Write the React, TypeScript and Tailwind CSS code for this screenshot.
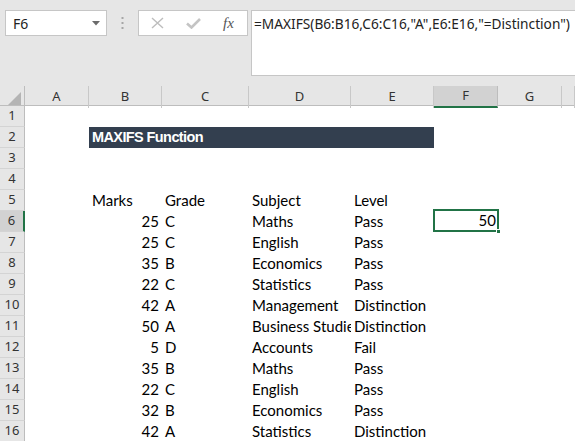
import React from "react";

const cols = ["A", "B", "C", "D", "E", "F", "G", ""];
const gridCols = "grid grid-cols-[25px_64px_73px_87px_102px_83px_64px_64px_1fr]";

type Row = { marks: string; grade: string; subject: string; level: string };

const data: Row[] = [
  { marks: "25", grade: "C", subject: "Maths", level: "Pass" },
  { marks: "25", grade: "C", subject: "English", level: "Pass" },
  { marks: "35", grade: "B", subject: "Economics", level: "Pass" },
  { marks: "22", grade: "C", subject: "Statistics", level: "Pass" },
  { marks: "42", grade: "A", subject: "Management", level: "Distinction" },
  { marks: "50", grade: "A", subject: "Business Studies", level: "Distinction" },
  { marks: "5", grade: "D", subject: "Accounts", level: "Fail" },
  { marks: "35", grade: "B", subject: "Maths", level: "Pass" },
  { marks: "22", grade: "C", subject: "English", level: "Pass" },
  { marks: "32", grade: "B", subject: "Economics", level: "Pass" },
  { marks: "42", grade: "A", subject: "Statistics", level: "Distinction" },
];

function Cell({ children, right }: { children?: React.ReactNode; right?: boolean }) {
  return (
    <div
      className={
        "h-[21px] overflow-hidden whitespace-nowrap px-[3px] leading-[21px] " +
        (right ? "text-right" : "")
      }
    >
      {children}
    </div>
  );
}

function RowHead({ n, active }: { n: number; active?: boolean }) {
  return (
    <div
      className={
        "h-[21px] flex items-center justify-center border-b border-[#d4d4d4] text-[13px] text-[#333] font-['Noto_Sans',sans-serif] " +
        (active
          ? "bg-[#d2d2d2] border-r-2 border-r-[#217346]"
          : "bg-[#e6e6e6] border-r border-r-[#bdbdbd]")
      }
    >
      {n}
    </div>
  );
}

export default function App() {
  return (
    <div className="w-[575px] h-[441px] overflow-hidden bg-white font-['Lato',sans-serif] text-[15px] text-black">
      {/* formula bar area */}
      <div className="h-[86px] bg-[#e6e6e6] flex items-start pt-[10px] pl-[5px]">
        <div className="w-[102px] h-[26px] bg-white border border-[#c6c6c6] flex items-center justify-between pl-[7px] pr-[6px] text-[14px] text-[#222] font-['Noto_Sans',sans-serif]">
          <span>F6</span>
          <svg width="8" height="5" viewBox="0 0 8 5">
            <path d="M0 0h8L4 4.5z" fill="#6b6b6b" />
          </svg>
        </div>
        <div className="w-[31px] h-[26px] flex items-center justify-center">
          <svg width="3" height="12" viewBox="0 0 3 12">
            <rect x="0.5" y="0" width="2" height="2" fill="#a6a6a6" />
            <rect x="0.5" y="5" width="2" height="2" fill="#a6a6a6" />
            <rect x="0.5" y="10" width="2" height="2" fill="#a6a6a6" />
          </svg>
        </div>
        <div className="w-[110px] h-[26px] bg-white border border-[#c6c6c6] flex items-center pl-[12px]">
          <svg width="13" height="12" viewBox="0 0 13 12">
            <path d="M1 1l11 10M12 1L1 11" stroke="#bdbdbd" strokeWidth="1.4" />
          </svg>
          <svg className="ml-[22px]" width="15" height="11" viewBox="0 0 15 11">
            <path d="M1 5.5l4.5 4L14 1" stroke="#c4c4c4" strokeWidth="2.6" fill="none" />
          </svg>
          <span className="ml-[22px] font-['Liberation_Serif',serif] italic text-[15px] text-[#555] leading-none">
            fx
          </span>
        </div>
        <div className="ml-[3px] flex-1 h-[66px] bg-white border border-r-0 border-[#c6c6c6] pl-[2px] pt-[3px] text-[13.7px] text-[#222] font-['Noto_Sans',sans-serif] whitespace-nowrap">
          =MAXIFS(B6:B16,C6:C16,"A",E6:E16,"=Distinction")
        </div>
      </div>

      {/* column headers */}
      <div className={gridCols + " h-[20px] bg-[#e6e6e6] border-b border-[#bdbdbd] font-['Noto_Sans',sans-serif] text-[13px] text-[#333]"}>
        <div className="relative border-r border-[#bdbdbd]">
          <svg className="absolute right-[3px] bottom-[3px]" width="13" height="13" viewBox="0 0 13 13">
            <path d="M13 0v13H0z" fill="#b4b4b4" />
          </svg>
        </div>
        {cols.map((c, i) =>
          c === "F" ? (
            <div key={i} className="flex items-center justify-center bg-[#d2d2d2] border-r border-[#bdbdbd] border-b-2 border-b-[#217346]">
              {c}
            </div>
          ) : (
            <div key={i} className="flex items-center justify-center border-r border-[#c8c8c8]">
              {c}
            </div>
          )
        )}
      </div>

      {/* rows */}
      {[1, 2, 3, 4].map((n) => (
        <div key={n} className={gridCols}>
          <RowHead n={n} />
          <Cell />
          {n === 2 ? (
            <div className="col-span-4 h-[21px] bg-[#333f4f] px-[3px] leading-[21px] text-white font-['Liberation_Sans',sans-serif] font-bold text-[14.5px] tracking-[-0.6px]">
              MAXIFS Function
            </div>
          ) : null}
        </div>
      ))}
      <div className={gridCols}>
        <RowHead n={5} />
        <Cell />
        <Cell>Marks</Cell>
        <Cell>Grade</Cell>
        <Cell>Subject</Cell>
        <Cell>Level</Cell>
      </div>
      {data.map((r, i) => (
        <div key={i} className={gridCols}>
          <RowHead n={i + 6} active={i === 0} />
          <Cell />
          <Cell right>{r.marks}</Cell>
          <Cell>{r.grade}</Cell>
          <Cell>{r.subject}</Cell>
          <Cell>{r.level}</Cell>
          {i === 0 ? (
            <div className="relative h-[21px]">
              <div className="absolute -top-[2px] -left-[1px] -right-[1px] bottom-0 border-2 border-[#217346] text-right pr-[1px] leading-[19px]">
                50
              </div>
              <div className="absolute -right-[3px] -bottom-[2px] w-[5px] h-[5px] bg-[#217346] border border-white" />
            </div>
          ) : null}
        </div>
      ))}
    </div>
  );
}
